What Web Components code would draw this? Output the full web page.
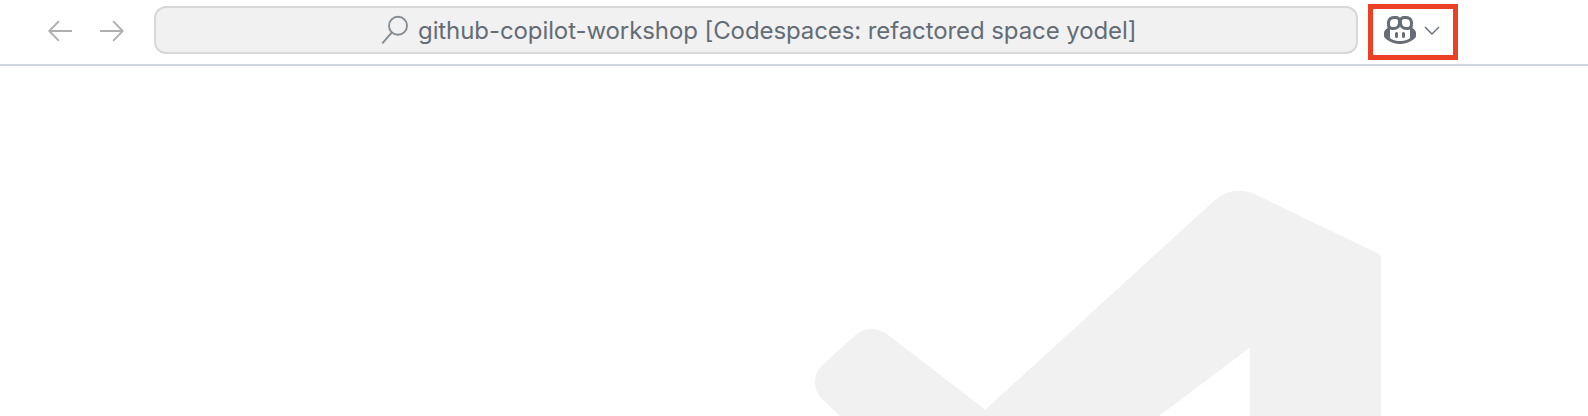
<!DOCTYPE html>
<html lang="en">
<head>
<meta charset="utf-8">
<title>Workspace</title>
<style>
body { margin: 0; background: #fff; font-family: Inter, "Liberation Sans", sans-serif; overflow: hidden; }
</style>
</head>
<body>
<app-window></app-window>
<script>
const define = (name, html) => customElements.define(name, class extends HTMLElement {
  constructor() {
    super();
    const t = document.createElement('template');
    t.innerHTML = html;
    this.attachShadow({ mode: 'open' }).append(t.content.cloneNode(true));
  }
});

define('nav-arrows', `
<style>
:host { display: flex; gap: 24px; }
svg { display: block; fill: none; stroke: #afafaf; stroke-width: 1.9; }
</style>
<svg width="28" height="24"><path d="M26 13H3.300M12.900 3.100 3.300 13l9.600 9.900"/></svg>
<svg width="28" height="24"><path d="M2 13h22.700M15.100 3.100 24.700 13 15.100 22.900"/></svg>`);

define('command-center', `
<style>
:host { display: flex; box-sizing: border-box; width: 1204px; height: 48px; border: 2px solid #d8d8d8; border-radius: 12px;
  background: #f1f1f1; align-items: center; padding-left: 225px; gap: 9px; color: #646c75; }
svg { display: block; fill: none; stroke: #858b92; stroke-width: 1.9; flex: none; }
span { font-size: 24px; line-height: 30px; padding-top: 2px; white-space: pre; letter-spacing: -0.088px; }
</style>
<svg width="28" height="30"><circle cx="17" cy="10.8" r="9"/><path d="M10.900 17.400 1.300 28.400"/></svg>
<span><slot></slot></span>`);

define('copilot-button', `
<style>
:host { display: flex; box-sizing: border-box; width: 90px; height: 56px; border: 5px solid #ec4024; padding: 5px 0 0 11px; gap: 8px; }
svg { display: block; flex: none; }
.bot { fill: #656d76; }
.chev { fill: none; stroke: #656d76; stroke-width: 1.4; }
</style>
<svg class="bot" width="32" height="32" viewBox="0 0 16 16"><path d="M7.998 15.035c-4.562 0-7.873-2.914-7.998-3.749V9.338c.085-.628.677-1.686 1.588-2.065.013-.07.024-.143.036-.218.029-.183.06-.384.126-.612-.201-.508-.254-1.084-.254-1.656 0-.87.128-1.769.693-2.484.579-.733 1.494-1.124 2.724-1.261 1.206-.134 2.262.034 2.944.765.05.053.096.108.139.165.044-.057.094-.112.143-.165.682-.731 1.738-.899 2.944-.765 1.23.137 2.145.528 2.724 1.261.566.715.693 1.614.693 2.484 0 .572-.053 1.148-.254 1.656.066.228.098.429.126.612.012.076.024.148.037.218.924.385 1.522 1.471 1.591 2.095v1.872c0 .766-3.351 3.795-8.002 3.795Zm0-1.485c2.28 0 4.584-1.11 5.002-1.433V7.862l-.023-.116c-.49.21-1.075.291-1.727.291-1.146 0-2.059-.327-2.71-.991A3.222 3.222 0 0 1 8 6.303a3.24 3.24 0 0 1-.544.743c-.65.664-1.563.991-2.71.991-.652 0-1.236-.081-1.727-.291l-.023.116v4.255c.419.323 2.722 1.433 5.002 1.433ZM6.762 2.83c-.193-.206-.637-.413-1.682-.297-1.019.113-1.479.404-1.713.7-.247.312-.369.789-.369 1.554 0 .793.129 1.171.308 1.371.162.181.519.379 1.442.379.853 0 1.339-.235 1.638-.54.315-.322.527-.827.617-1.553.117-.935-.037-1.395-.241-1.614Zm4.155-.297c-1.044-.116-1.488.091-1.681.297-.204.219-.359.679-.242 1.614.091.726.303 1.231.618 1.553.299.305.784.54 1.638.54.922 0 1.28-.198 1.442-.379.179-.2.308-.578.308-1.371 0-.765-.123-1.242-.37-1.554-.233-.296-.693-.587-1.713-.7Z"/><path d="M6.25 9.037a.75.75 0 0 1 .75.75v1.501a.75.75 0 0 1-1.5 0V9.787a.75.75 0 0 1 .75-.75Zm4.25.75v1.501a.75.75 0 0 1-1.5 0V9.787a.75.75 0 0 1 1.500 0Z"/></svg>
<svg class="chev" width="16" height="32"><path d="M1 13l7 7 7-7"/></svg>`);

define('title-bar', `
<style>
:host { display: flex; box-sizing: border-box; height: 66px; border-bottom: 2px solid #d0d7de; align-items: flex-start; }
nav-arrows { margin: 18px 28px 0 46px; }
command-center { margin: 6px 10px 0 0; }
copilot-button { margin-top: 4px; }
</style>
<nav-arrows></nav-arrows>
<command-center><slot></slot></command-center>
<copilot-button></copilot-button>`);

define('editor-watermark', `
<style>
:host { display: block; height: 350px; padding-left: 800px; }
svg { display: block; fill: #f1f1f1; }
</style>
<svg width="600" height="350" viewBox="800 66 600 350"><path d="M840 416 822.500 399.500Q815 392 815 382.500Q815 372 822.500 365L855 335.500Q862 329 871 329Q880 329 887.500 334.500L985.300 409.700 1215 200Q1225 190.700 1239 190.700Q1247 190.700 1256 194.700L1378 253.500 1381 256V416H1250V347.500L1159 416Z"/></svg>`);

define('app-window', `
<style>:host { display: block; height: 416px; background: #fff; overflow: hidden; }</style>
<title-bar>github-copilot-workshop [Codespaces: refactored space yodel]</title-bar>
<editor-watermark></editor-watermark>`);
</script>
</body>
</html>
